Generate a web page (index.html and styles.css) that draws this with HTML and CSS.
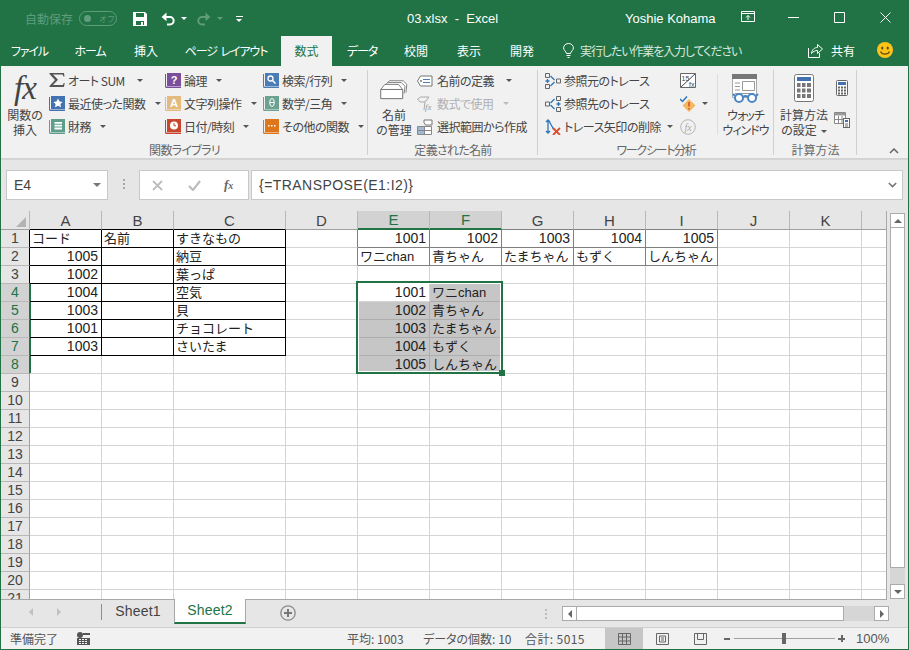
FILE: index.html
```html
<!DOCTYPE html>
<html lang="ja">
<head>
<meta charset="utf-8">
<title>03.xlsx - Excel</title>
<link rel="stylesheet" href="styles.css">
</head>
<body>
<div class="window">
  <header class="titlebar">
    <span class="autosave">自動保存</span>
    <span class="toggle"><i class="knob"></i><b>オフ</b></span>
    <svg class="qa save" viewBox="0 0 14 14"><path fill="#fff" d="M0 0h12l2 2v12H0z"/><path fill="#217346" d="M3 1h8v4H3zM3 9h8v4H3z"/><path fill="#fff" d="M8 10h2v3H8z"/></svg>
    <svg class="qa undo" viewBox="0 0 14 14"><path fill="none" stroke="#fff" stroke-width="2" d="M2.5 5H9a3.6 3.6 0 0 1 0 7.4H6"/><path fill="#fff" d="M5.5 .6v8.6L.6 5z"/></svg>
    <i class="arw w up1"></i>
    <svg class="qa redo" viewBox="0 0 14 14"><path fill="none" stroke="#5e9c7a" stroke-width="2" d="M11.5 5H5a3.6 3.6 0 0 0 0 7.4H8"/><path fill="#5e9c7a" d="M8.5 .6v8.6L13.4 5z"/></svg>
    <i class="arw dim up2"></i>
    <span class="custom"><i></i><i class="arw w"></i></span>
    <span class="doc">03.xlsx&nbsp; -&nbsp; Excel</span>
    <span class="user">Yoshie Kohama</span>
    <svg class="wbtn opt" viewBox="0 0 14 12"><path fill="none" stroke="#fff" d="M.5 .5h13v10H.5zM.5 2.500h13M7 9V4.500M5 6.500l2-2 2 2"/></svg>
    <svg class="wbtn min" viewBox="0 0 11 11"><path stroke="#fff" d="M0 5.500h11"/></svg>
    <svg class="wbtn max" viewBox="0 0 11 11"><path fill="none" stroke="#fff" d="M.5 .5h10v10H.5z"/></svg>
    <svg class="wbtn cls" viewBox="0 0 11 11"><path stroke="#fff" d="M.5 .5l10 10M10.500 .5l-10 10"/></svg>
  </header>

  <nav class="tabs">
    <span class="tab k">ファイル</span>
    <span class="tab k">ホーム</span>
    <span class="tab">挿入</span>
    <span class="tab k">ページ レイアウト</span>
    <span class="tab active">数式</span>
    <span class="tab k">データ</span>
    <span class="tab">校閲</span>
    <span class="tab">表示</span>
    <span class="tab">開発</span>
    <svg class="bulb" viewBox="0 0 11 15"><path fill="none" stroke="#fff" d="M3.500 10.500C3 8 .6 7.500.6 4.800a4.900 4.300 0 0 1 9.800 0C10.400 7.500 8 8 7.500 10.500zM3.500 12.500h4M4.500 14.500h2"/></svg>
    <span class="tell">実行したい作業を入力してください</span>
    <svg class="shareic" viewBox="0 0 15 15"><path fill="none" stroke="#fff" d="M.5 5v9.500h11V10M3.500 10.500C4 6 7 4.500 9.500 4.500V1.500l5 4.500-5 4.500V7.500C7 7.500 5 8.500 3.500 10.500z"/></svg>
    <span class="share">共有</span>
    <svg class="smile" viewBox="0 0 16 16"><circle cx="8" cy="8" r="8" fill="#fcc419"/><ellipse cx="5.300" cy="6" rx="1.100" ry="1.600" fill="#5c4a10"/><ellipse cx="10.700" cy="6" rx="1.100" ry="1.600" fill="#5c4a10"/><path fill="none" stroke="#5c4a10" stroke-width="1.200" d="M3.500 9.500c1.500 3.500 7.500 3.500 9 0"/></svg>
  </nav>

  <section class="ribbon">
    <div class="group g1">
      <div class="gbody">
        <div class="big b-fx">
          <span class="fx">fx</span>
          <span class="blabel">関数の<br>挿入</span>
        </div>
        <div class="col c1">
          <div class="item">
            <svg class="ic sigma" viewBox="0 0 16 14"><path fill="#555" d="M.5 0H15l.5 3.500h-1L13.500 1.500H4l5 5.300L4 12h9.800l1-2h.9L15 14H.5v-1.100L6 7 .5 1z"/></svg>
            <span>オート SUM</span><i class="arw m12"></i>
          </div>
          <div class="item">
            <svg class="ic" viewBox="0 0 16 16"><path fill="#4472b0" d="M0 1h1v12.500h15v1.500H1.500Q0 15 0 13.500zM2 0H16v13H2z"/><path fill="#fff" d="M9 2.500l1.500 3 3.200.4-2.300 2.200.6 3.200L9 9.800l-3 1.500.6-3.200-2.300-2.200 3.200-.4z"/></svg>
            <span>最近使った関数</span><i class="arw"></i>
          </div>
          <div class="item">
            <svg class="ic" viewBox="0 0 16 16"><path fill="#5f9e8b" d="M0 1h1v12.500h15v1.500H1.500Q0 15 0 13.500zM2 0H16v13H2z"/><path fill="#fff" d="M5.500 3h7.500v1.800H5.500zM5.500 5.800h7.500v1.800H5.500zM5.500 8.600h7.500v1.800H5.500z"/></svg>
            <span>財務</span><i class="arw"></i>
          </div>
        </div>
        <div class="col c2">
          <div class="item">
            <svg class="ic" viewBox="0 0 16 16"><path fill="#7a4f9c" d="M0 1h1v12.500h15v1.500H1.500Q0 15 0 13.500zM2 0H16v13H2z"/><text x="9" y="11" class="glyph" fill="#fff">?</text></svg>
            <span>論理</span><i class="arw"></i>
          </div>
          <div class="item">
            <svg class="ic" viewBox="0 0 16 16"><path fill="#e4bb7c" d="M0 1h1v12.500h15v1.500H1.500Q0 15 0 13.500zM2 0H16v13H2z"/><text x="9" y="11" class="glyph" fill="#fff">A</text></svg>
            <span>文字列操作</span><i class="arw"></i>
          </div>
          <div class="item">
            <svg class="ic" viewBox="0 0 16 16"><path fill="#c8452e" d="M0 1h1v12.500h15v1.500H1.500Q0 15 0 13.500zM2 0H16v13H2z"/><circle cx="9" cy="6.500" r="4" fill="#fff"/><path fill="none" stroke="#c8452e" d="M9 4v2.800h2"/></svg>
            <span>日付/時刻</span><i class="arw"></i>
          </div>
        </div>
        <div class="col c3">
          <div class="item">
            <svg class="ic" viewBox="0 0 16 16"><path fill="#4a7db5" d="M0 1h1v12.500h15v1.500H1.500Q0 15 0 13.500zM2 0H16v13H2z"/><circle cx="7.500" cy="5.500" r="2.500" fill="none" stroke="#fff" stroke-width="1.300"/><path stroke="#fff" stroke-width="1.600" d="M9.500 7.500l3 3"/></svg>
            <span>検索/行列</span><i class="arw"></i>
          </div>
          <div class="item">
            <svg class="ic" viewBox="0 0 16 16"><path fill="#6ba28f" d="M0 1h1v12.500h15v1.500H1.500Q0 15 0 13.500zM2 0H16v13H2z"/><ellipse cx="9" cy="6.500" rx="2.300" ry="4" fill="none" stroke="#fff"/><path stroke="#fff" d="M6.700 6.500h4.600"/></svg>
            <span>数学/三角</span><i class="arw"></i>
          </div>
          <div class="item">
            <svg class="ic" viewBox="0 0 16 16"><path fill="#e0761b" d="M0 1h1v12.500h15v1.500H1.500Q0 15 0 13.500zM2 0H16v13H2z"/><path fill="#fff" d="M5 6h1.500v1.500H5zM8 6h1.500v1.500H8zM11 6h1.500v1.500H11z"/></svg>
            <span>その他の関数</span><i class="arw"></i>
          </div>
        </div>
      </div>
      <div class="glabel">関数ライブラリ</div>
    </div>

    <div class="group g2">
      <div class="gbody">
        <div class="big b-name">
          <svg class="bigic" viewBox="0 0 30 24"><path fill="#fff" stroke="#777" d="M5 9l5-6h15l4 4-1 9"/><path fill="#fff" stroke="#777" d="M3 11l5-6h15l4 4-1 8"/><path fill="#fff" stroke="#777" d="M1 12l4-5h15l4 5"/><path fill="#fff" stroke="#666" d="M.5 12.500h24v10H.5z"/></svg>
          <span class="blabel">名前<br>の管理</span>
        </div>
        <div class="col c4">
          <div class="item">
            <svg class="ic" viewBox="0 0 16 12"><path fill="#fff" stroke="#777" d="M3.500 1H15v10H3.500L.5 6z"/><circle cx="4" cy="6" r="1" fill="#777"/><path stroke="#4a7db5" d="M6 4.500h7M6 7.500h7"/></svg>
            <span>名前の定義</span><i class="arw m12"></i>
          </div>
          <div class="item off">
            <svg class="ic" viewBox="0 0 16 16"><path fill="none" stroke="#aaa" d="M3.500 1H12L9 5l-2 1-4 0L.7 3zM8 6l-1 8"/><text x="8" y="14" class="mini" fill="#999">fx</text></svg>
            <span>数式で使用</span><i class="arw lite"></i>
          </div>
          <div class="item">
            <svg class="ic" viewBox="0 0 16 16"><path fill="#fff" stroke="#888" d="M.5 7.500h14v8H.5z"/><path fill="#9fb9d6" d="M1 8h6v3H1zM1 12h6v3H1z"/><path stroke="#888" d="M7.500 8v7M1 11.500h13"/><path fill="#fff" stroke="#777" d="M7 1h8v5H8.500L7 3.500z"/></svg>
            <span>選択範囲から作成</span>
          </div>
        </div>
      </div>
      <div class="glabel">定義された名前</div>
    </div>

    <div class="group g3">
      <div class="gbody">
        <div class="col c5">
          <div class="item">
            <svg class="ic" viewBox="0 0 16 16"><path fill="none" stroke="#666" d="M.5 .5h4v4h-4zM.5 11.500h4v4h-4zM11.500 6h4v4h-4z"/><path fill="none" stroke="#2e75b6" stroke-width="1.300" d="M2.500 6v4M.5 8h4M5.500 3l4 4M5.500 13l4-4"/></svg>
            <span>参照元のトレース</span>
          </div>
          <div class="item">
            <svg class="ic" viewBox="0 0 16 16"><path fill="none" stroke="#666" d="M.5 6h4v4h-4zM11.500 .5h4v4h-4zM11.500 11.500h4v4h-4z"/><path fill="none" stroke="#2e75b6" stroke-width="1.300" d="M13.500 6v4M11.500 8h4M5.500 7l4-4M5.500 9l4 4"/></svg>
            <span>参照先のトレース</span>
          </div>
          <div class="item">
            <svg class="ic" viewBox="0 0 16 16"><path fill="none" stroke="#2e75b6" stroke-width="1.300" d="M3 1v13M1 3l2-2 2 2M1 12l2 2 2-2M4 2l5 9"/><path stroke="#d9502e" stroke-width="1.800" d="M8 9l7 7M15 9l-7 7"/></svg>
            <span>トレース矢印の削除</span><i class="arw m3"></i>
          </div>
        </div>
        <div class="col c6">
          <div class="item">
            <svg class="ic" viewBox="0 0 16 16"><path fill="#fff" stroke="#666" d="M.5 .5h15v14H.5z"/><text x="1.500" y="7.500" class="mini2" fill="#444">15</text><path stroke="#444" d="M1 14L15 1"/><text x="9" y="13.500" class="mini2" fill="#444">fx</text></svg>
          </div>
          <div class="item">
            <svg class="ic" viewBox="0 0 16 16"><path fill="#f4b860" d="M9 3l6.500 6.500L9 16 2.500 9.500z"/><path stroke="#d9502e" stroke-width="1.600" d="M9 6v4.500M9 12v1.500"/><path fill="none" stroke="#2e75b6" stroke-width="1.500" d="M0 3l2.500 2.500L7 .5"/></svg>
            <i class="arw m3"></i>
          </div>
          <div class="item">
            <svg class="ic" viewBox="0 0 16 16"><circle cx="8" cy="8" r="7.300" fill="none" stroke="#b5b5b5"/><text x="8" y="12" text-anchor="middle" class="mini3" fill="#aaa">fx</text></svg>
          </div>
        </div>
        <i class="vsep"></i>
        <div class="big b-watch">
          <svg class="watchic" viewBox="0 0 30 30"><path fill="#fff" stroke="#aaa" d="M1.500 .5h24v23h-24z"/><path fill="#777" d="M1 0h25v5H1z"/><path fill="none" stroke="#999" d="M11.500 7.500h12v9h-12zM4 9h5M4 12.500h5M4 16h5M4 19.500h19"/><circle cx="8" cy="24" r="4" fill="#fff" stroke="#4a86c5" stroke-width="2"/><circle cx="21" cy="24" r="4" fill="#fff" stroke="#4a86c5" stroke-width="2"/><path fill="none" stroke="#4a86c5" stroke-width="2" d="M12 23q2.500-2 5 0M4 22l-2-2M25 22l2-2"/></svg>
          <span class="blabel tight">ウォッチ<br>ウィンドウ</span>
        </div>
      </div>
      <div class="glabel gl3">ワークシート分析</div>
    </div>

    <div class="group g4">
      <div class="gbody">
        <div class="big b-calc">
          <svg class="calcic" viewBox="0 0 20 28"><rect x=".5" y=".5" width="19" height="27" rx="2" fill="#fff" stroke="#777"/><path fill="#4472b0" d="M3 3h14v4H3z"/><path fill="#777" d="M3 9h3.500v4H3zM8 9h3.500v4H8zM13 9h4v4h-4zM3 14.500h3.500v4H3zM8 14.500h3.500v4H8zM13 14.500h4v4h-4zM3 20h3.500v4H3zM8 20h3.500v4H8zM13 20h4v4h-4z"/></svg>
          <span class="blabel">計算方法<br>の設定<i class="arw in"></i></span>
        </div>
        <div class="col c7">
          <svg class="calc-s" viewBox="0 0 12 16"><rect x=".5" y=".5" width="11" height="15" rx="1" fill="#fff" stroke="#666"/><path fill="#4472b0" d="M2 2h8v3H2z"/><path fill="#666" d="M2 6.500h2v2H2zM5 6.500h2v2H5zM8 6.500h2v2H8zM2 9.500h2v2H2zM5 9.500h2v2H5zM8 9.500h2v2H8zM2 12.500h2v2H2zM5 12.500h2v2H5zM8 12.500h2v2H8z"/></svg>
          <svg class="calc-t" viewBox="0 0 16 16"><path fill="#fff" stroke="#888" d="M.5 .5h11v11H.5z"/><path fill="#9a9a9a" d="M1 1h10v2.500H1z"/><path stroke="#888" d="M4.500 4v7M8 4v7M1 7.500h10"/><rect x="9.500" y="6.500" width="6" height="9" fill="#fff" stroke="#666"/><path fill="#4472b0" d="M11 8h3v2h-3z"/><path stroke="#666" d="M11 12h3M11 14h3"/></svg>
        </div>
      </div>
      <div class="glabel gl4">計算方法</div>
    </div>
    <svg class="collapse" viewBox="0 0 10 6"><path fill="none" stroke="#666" stroke-width="1.500" d="M1 5l4-4 4 4"/></svg>
  </section>

  <section class="formula">
    <div class="namebox"><span>E4</span><i class="arw big-arw"></i></div>
    <span class="grip"></span>
    <div class="fxbox">
      <svg class="fbtn" viewBox="0 0 11 11"><path stroke="#bdbdbd" stroke-width="1.800" d="M1 1l9 9M10 1l-9 9"/></svg>
      <svg class="fbtn chk" viewBox="0 0 13 11"><path fill="none" stroke="#bdbdbd" stroke-width="2.200" d="M1 6l4 4 7-9"/></svg>
      <span class="fbtn-fx">f<small>x</small></span>
    </div>
    <div class="fbox"><span>{=TRANSPOSE(E1:I2)}</span>
      <svg class="chev" viewBox="0 0 11 7"><path fill="none" stroke="#777" stroke-width="2" d="M1 1l4.500 4.500L10 1"/></svg>
    </div>
  </section>

  <section class="sheetarea">
    <div class="sheet">
      <table class="grid">
        <colgroup>
          <col class="w-rh"><col class="w-n"><col class="w-n"><col class="w-c"><col class="w-n"><col class="w-n"><col class="w-n"><col class="w-n"><col class="w-n"><col class="w-n"><col class="w-n"><col class="w-n"><col class="w-n">
        </colgroup>
        <thead>
          <tr>
            <th class="corner"><svg viewBox="0 0 10 10"><path fill="#b4b4b4" d="M10 0v10H0z"/></svg></th>
            <th class="hb">A</th><th class="hb">B</th><th class="hb">C</th><th>D</th>
            <th class="hs">E</th><th class="hs">F</th><th class="hg">G</th><th class="hg">H</th><th class="hg">I</th><th>J</th><th>K</th><th></th>
          </tr>
        </thead>
        <tbody>
          <tr><th class="rb">1</th><td class="b">コード</td><td class="b">名前</td><td class="b">すきなもの</td><td class="gr"></td><td class="g n">1001</td><td class="g n">1002</td><td class="g n">1003</td><td class="g n">1004</td><td class="g n">1005</td><td></td><td></td><td></td></tr>
          <tr><th class="rb">2</th><td class="b n">1005</td><td class="b"></td><td class="b">納豆</td><td class="gr"></td><td class="g">ワニchan</td><td class="g">青ちゃん</td><td class="g">たまちゃん</td><td class="g">もずく</td><td class="g">しんちゃん</td><td></td><td></td><td></td></tr>
          <tr><th class="rb">3</th><td class="b n">1002</td><td class="b"></td><td class="b">葉っぱ</td><td></td><td></td><td></td><td></td><td></td><td></td><td></td><td></td><td></td></tr>
          <tr><th class="rs">4</th><td class="b n">1004</td><td class="b"></td><td class="b">空気</td><td></td><td class="n">1001</td><td class="f">ワニchan</td><td></td><td></td><td></td><td></td><td></td><td></td></tr>
          <tr><th class="rs">5</th><td class="b n">1003</td><td class="b"></td><td class="b">貝</td><td></td><td class="f n">1002</td><td class="f">青ちゃん</td><td></td><td></td><td></td><td></td><td></td><td></td></tr>
          <tr><th class="rs">6</th><td class="b n">1001</td><td class="b"></td><td class="b">チョコレート</td><td></td><td class="f n">1003</td><td class="f">たまちゃん</td><td></td><td></td><td></td><td></td><td></td><td></td></tr>
          <tr><th class="rs">7</th><td class="b n">1003</td><td class="b"></td><td class="b">さいたま</td><td></td><td class="f n">1004</td><td class="f">もずく</td><td></td><td></td><td></td><td></td><td></td><td></td></tr>
          <tr><th class="rs">8</th><td></td><td></td><td></td><td></td><td class="f n">1005</td><td class="f">しんちゃん</td><td></td><td></td><td></td><td></td><td></td><td></td></tr>
          <tr><th>9</th><td></td><td></td><td></td><td></td><td></td><td></td><td></td><td></td><td></td><td></td><td></td><td></td></tr>
          <tr><th>10</th><td></td><td></td><td></td><td></td><td></td><td></td><td></td><td></td><td></td><td></td><td></td><td></td></tr>
          <tr><th>11</th><td></td><td></td><td></td><td></td><td></td><td></td><td></td><td></td><td></td><td></td><td></td><td></td></tr>
          <tr><th>12</th><td></td><td></td><td></td><td></td><td></td><td></td><td></td><td></td><td></td><td></td><td></td><td></td></tr>
          <tr><th>13</th><td></td><td></td><td></td><td></td><td></td><td></td><td></td><td></td><td></td><td></td><td></td><td></td></tr>
          <tr><th>14</th><td></td><td></td><td></td><td></td><td></td><td></td><td></td><td></td><td></td><td></td><td></td><td></td></tr>
          <tr><th>15</th><td></td><td></td><td></td><td></td><td></td><td></td><td></td><td></td><td></td><td></td><td></td><td></td></tr>
          <tr><th>16</th><td></td><td></td><td></td><td></td><td></td><td></td><td></td><td></td><td></td><td></td><td></td><td></td></tr>
          <tr><th>17</th><td></td><td></td><td></td><td></td><td></td><td></td><td></td><td></td><td></td><td></td><td></td><td></td></tr>
          <tr><th>18</th><td></td><td></td><td></td><td></td><td></td><td></td><td></td><td></td><td></td><td></td><td></td><td></td></tr>
          <tr><th>19</th><td></td><td></td><td></td><td></td><td></td><td></td><td></td><td></td><td></td><td></td><td></td><td></td></tr>
          <tr><th>20</th><td></td><td></td><td></td><td></td><td></td><td></td><td></td><td></td><td></td><td></td><td></td><td></td></tr>
          <tr><th>21</th><td></td><td></td><td></td><td></td><td></td><td></td><td></td><td></td><td></td><td></td><td></td><td></td></tr>
        </tbody>
      </table>
      <div class="selection"><i class="handle"></i></div>
    </div>
    <div class="vscroll">
      <span class="sbtn"><i class="tri up"></i></span>
      <span class="vthumb"></span>
      <span class="vtrack"></span>
      <span class="sbtn"><i class="tri down"></i></span>
    </div>
  </section>

  <section class="sheettabs">
    <div class="nav"><i class="tri left lite"></i><i class="tri right lite"></i></div>
    <span class="stab">Sheet1</span>
    <span class="stab on">Sheet2</span>
    <svg class="plus" viewBox="0 0 16 16"><circle cx="8" cy="8" r="7.200" fill="none" stroke="#8a8a8a" stroke-width="1.300"/><path stroke="#777" stroke-width="2" d="M8 4v8M4 8h8"/></svg>
    <span class="hgrip"></span>
    <div class="hscroll">
      <span class="sbtn h"><i class="tri left"></i></span>
      <span class="hthumb"></span>
      <span class="htrack"></span>
      <span class="sbtn h"><i class="tri right"></i></span>
    </div>
  </section>

  <footer class="status">
    <span class="ready">準備完了</span>
    <svg class="macro" viewBox="0 0 13 13"><circle cx="3" cy="3" r="3" fill="#555"/><path fill="#555" d="M6 1h7v2H6zM0 6h13v7H0z"/><path fill="#f1f1f1" d="M2 7h2v1H2zM5 7h2v1H5zM8 7h2v1H8zM2 9h2v1H2zM5 9h2v1H5zM8 9h2v1H8zM2 11h2v1H2zM5 11h2v1H5zM8 11h2v1H8z"/></svg>
    <span class="st s1">平均: 1003</span>
    <span class="st s2">データの個数: 10</span>
    <span class="st s3">合計: 5015</span>
    <span class="view on"><svg viewBox="0 0 13 12"><path fill="none" stroke="#666" d="M.5 .5h12v11H.5zM4.500 .5v11M8.500 .5v11M.5 4h12M.5 8h12"/></svg></span>
    <span class="view"><svg viewBox="0 0 13 12"><path fill="none" stroke="#666" d="M.5 .5h12v11H.5zM3.500 3h6v6h-6zM5 5h3M5 7h3"/></svg></span>
    <span class="view"><svg viewBox="0 0 13 12"><path fill="none" stroke="#666" d="M.5 .5h12v11H.5zM3.500 .5v6h6v-6"/></svg></span>
    <div class="zoom">
      <i class="zm"></i>
      <span class="slider"><i class="thumb"></i></span>
      <i class="zp"></i>
      <span class="pct">100%</span>
    </div>
  </footer>
</div>
</body>
</html>
```

FILE: styles.css
```css
* { box-sizing: border-box; }
html, body { margin: 0; padding: 0; }
body { width: 909px; height: 650px; overflow: hidden; font-family: "Noto Sans CJK JP", "Liberation Sans", sans-serif; font-size: 12px; color: #444; }
i { font-style: normal; display: block; }
svg { display: block; flex: none; }

.window { width: 909px; height: 650px; border: 1px solid #217346; border-top: 0; background: #e6e6e6; display: flex; flex-direction: column; overflow: hidden; }

/* title */
.titlebar { height: 36px; background: #217346; display: flex; align-items: center; color: #fff; flex: none; margin-left: -1px; margin-right: -1px; padding-top: 1px; }
.autosave { margin-left: 25px; color: #5f9d7c; font-size: 12px; font-feature-settings: "palt"; width: 47px; white-space: nowrap; }
.toggle { margin-left: 7px; width: 38px; height: 15px; border: 1px solid #5f9d7c; border-radius: 8px; display: flex; align-items: center; color: #5f9d7c; font-size: 8px; }
.knob { width: 7px; height: 7px; border-radius: 50%; background: #5f9d7c; margin-left: 4px; }
.toggle b { font-weight: 400; margin-left: 8px; white-space: nowrap; }
.qa { width: 14px; height: 14px; }
.save { margin-left: 16px; }
.undo { margin-left: 14px; }
.up1 { margin-left: 5px; }
.redo { margin-left: 10px; }
.up2 { margin-left: 4px; }
.custom { margin-left: 13px; width: 7px; display: flex; flex-direction: column; gap: 2px; margin-top: 1px; }
.custom i:first-child { height: 1px; background: #fff; }
.doc { margin-left: 164px; width: 92px; font: 13px "Liberation Sans", sans-serif; color: #fff; white-space: nowrap; }
.user { margin-left: 126px; width: 92px; font: 13px "Liberation Sans", sans-serif; white-space: nowrap; }
.wbtn { flex: none; margin-bottom: 3px; }
.opt { width: 14px; height: 12px; margin-left: 24px; }
.min { width: 11px; height: 11px; margin-left: 33px; }
.max { width: 11px; height: 11px; margin-left: 35px; }
.cls { width: 11px; height: 11px; margin-left: 35px; }

.arw { width: 0; height: 0; border-left: 3px solid transparent; border-right: 3px solid transparent; border-top: 3px solid #555; flex: none; margin-left: 6px; }
.arw.w { border-top-color: #fff; }
.arw.dim { border-top-color: #5f9d7c; }
.arw.lite { border-top-color: #bbb; }
.arw.m12 { margin-left: 9px; }
.arw.m3 { margin-left: 3px; }
.arw.in { display: inline-block; vertical-align: 2px; margin-left: 4px; }
.custom .arw { margin-left: 0; border-width: 3px 3.500px 0; }

/* tabs */
.tabs { height: 30px; background: #217346; display: flex; align-items: stretch; color: #fff; flex: none; margin: 0 -1px; }
.tab { font-size: 12px; font-feature-settings: "palt"; line-height: 29px; white-space: nowrap; flex: none; text-align: center; }
.tab.k { letter-spacing: -1.1px; word-spacing: 2px; }
.tab:nth-child(1) { width: 59px; }
.tab:nth-child(2) { width: 62px; }
.tab:nth-child(3) { width: 50px; }
.tab:nth-child(4) { width: 110px; }
.tab:nth-child(5) { width: 51px; }
.tab:nth-child(6) { width: 60px; }
.tab:nth-child(7) { width: 48px; }
.tab:nth-child(8) { width: 58px; }
.tab:nth-child(9) { width: 48px; }
.tab.active { background: #f1f1f1; color: #217346; }
.bulb { width: 11px; height: 15px; margin: 7px 0 0 17px; }
.tell { margin-left: 6px; width: 228px; line-height: 29px; font-feature-settings: "palt"; letter-spacing: -1.1px; color: #d8e8df; white-space: nowrap; }
.shareic { width: 15px; height: 15px; margin-top: 7px; }
.share { margin-left: 8px; width: 46px; line-height: 29px; }
.smile { width: 16px; height: 16px; margin-top: 6px; }

/* ribbon */
.ribbon { height: 94px; flex: none; background: #f1f1f1; border-bottom: 2px solid #d4d4d4; display: flex; position: relative; font-feature-settings: "palt"; white-space: nowrap; }
.group { display: flex; flex-direction: column; height: 92px; flex: none; position: relative; }
.group::after { content: ""; position: absolute; right: 0; top: 4px; bottom: 3px; width: 1px; background: #d0d0d0; }
.g1 { width: 367px; }
.g2 { width: 170px; }
.g3 { width: 236px; }
.g4 { width: 83px; }
.gbody { height: 76px; display: flex; padding-top: 3px; flex: none; }
.glabel { text-align: center; color: #666; line-height: 16px; height: 16px; letter-spacing: -.7px; }
.gl3 { letter-spacing: -1.3px; }
.gl4 { letter-spacing: 0; }
.col { display: flex; flex-direction: column; flex: none; }
.item { height: 23px; display: flex; align-items: center; gap: 3px; }
.item span { letter-spacing: -.5px; }
.ic { width: 16px; height: 16px; }
.sigma { height: 14px; margin-top: -2px; }
.item.off { color: #b0b0b0; }
.big { display: flex; flex-direction: column; align-items: center; flex: none; position: relative; }
.blabel { text-align: center; line-height: 15px; }
.blabel.tight { letter-spacing: -1px; }
.b-fx { width: 48px; }
.fx { font: italic 33px/38px "Liberation Serif", serif; color: #444; height: 38px; letter-spacing: -1px; }
.c1 { width: 116px; }
.c2 { width: 98px; }
.c3 { width: 100px; }
.b-name { width: 49px; padding-left: 3px; }
.bigic { width: 28px; height: 22px; margin: 9px 0 7px; }
.g2 .ic { margin-right: 1px; }
.c5 { margin-left: 7px; width: 135px; }
.c6 { width: 37px; }
.vsep { width: 1px; height: 61px; background: #dedede; margin: 5px 0 0 0; }
.b-watch { width: 55px; }
.watchic { width: 30px; height: 30px; margin: 5px 0 3px; }
.b-calc { width: 54px; margin-left: 3px; }
.calcic { width: 20px; height: 28px; margin: 5px 0 5px; }
.c7 { width: 22px; align-items: center; }
.calc-s { width: 12px; height: 16px; margin-top: 11px; }
.calc-t { width: 16px; height: 16px; margin-top: 16px; }
.collapse { position: absolute; left: 888px; top: 82px; width: 10px; height: 6px; }
.glyph { font: 700 11px "Liberation Sans", sans-serif; text-anchor: middle; }
.mini { font: italic 9px "Liberation Serif", serif; }
.mini2 { font: 7px "Liberation Sans", sans-serif; }
.mini3 { font: italic 10px "Liberation Serif", serif; }

/* formula */
.formula { height: 51px; flex: none; display: flex; padding: 10px 5px 11px 5px; }
.namebox { width: 102px; height: 30px; border: 1px solid #c8c8c8; background: #fff; display: flex; align-items: center; justify-content: space-between; padding: 0 6px 0 7px; font: 14px "Liberation Sans", sans-serif; color: #444; }
.arw.big-arw { border-width: 4px 4px 0; border-top-color: #777; }
.grip { width: 2px; height: 12px; margin: 9px 14px 0 15px; background-image: linear-gradient(#aaa 2px, transparent 2px); background-size: 2px 4px; }
.fxbox { width: 110px; height: 30px; border: 1px solid #c8c8c8; background: #fff; display: flex; align-items: center; padding-left: 12px; }
.fbtn { width: 11px; height: 11px; }
.fbtn.chk { width: 13px; margin-left: 25px; }
.fbtn-fx { margin-left: 23px; font: italic 700 13px "Liberation Serif", serif; color: #666; }
.fbtn-fx small { font-size: 10px; }
.fbox { width: 652px; height: 30px; margin-left: 2px; border: 1px solid #c8c8c8; background: #fff; display: flex; align-items: center; justify-content: space-between; padding: 0 5px 0 7px; font: 14px "Liberation Sans", sans-serif; letter-spacing: .45px; color: #444; }
.chev { width: 9px; height: 6px; }

/* sheet */
.sheetarea { height: 389px; flex: none; display: flex; }
.sheet { width: 886px; height: 389px; position: relative; overflow: hidden; background: #fff; border-right: 1px solid #a8a8a8; border-bottom: 1px solid #a8a8a8; flex: none; }
.grid { table-layout: fixed; border-collapse: separate; border-spacing: 0; width: 933px; font-size: 13px; }
.w-rh { width: 29px; }
.w-n { width: 72px; }
.w-c { width: 112px; }
.grid tr { height: 18px; }
.grid td, .grid th { height: 18px; padding: 0; overflow: hidden; white-space: nowrap; }
.grid td { border-right: 1px solid #d4d4d4; border-bottom: 1px solid #d4d4d4; padding: 0 2px; line-height: 17px; color: #222; font-family: "Liberation Sans", "Noto Sans CJK JP", sans-serif; }
.grid thead th { background: #e6e6e6; border-right: 1px solid #b8b8b8; border-bottom: 1px solid #9f9f9f; font: 400 15px/17px "Liberation Sans", sans-serif; color: #444; }
.grid tbody th { background: #e6e6e6; border-right: 1px solid #9f9f9f; border-bottom: 1px solid #b8b8b8; font: 400 14px/17px "Liberation Sans", sans-serif; color: #444; }
.corner svg { width: 10px; height: 10px; margin: 3px 0 0 15px; }
.grid thead th.hb { border-bottom-color: #000; }
.grid thead th.hg { border-bottom-color: #7f7f7f; }
.grid thead th.hs { background: #d2d2d2; color: #217346; border-bottom: 2px solid #217346; }
.grid tbody th.rb { border-right-color: #000; }
.grid tbody th.rs { background: #d2d2d2; color: #217346; border-right-color: #217346; box-shadow: 1px 0 0 #217346; }
.grid td.b { border-color: #000; }
.grid td.g { border-color: #7f7f7f; }
.grid td.gr { border-right-color: #7f7f7f; }
.grid td.f { background: #c6c6c6; border-color: #adadad; }
.grid td.n { text-align: right; padding-right: 3px; font-size: 14px; }
.selection { position: absolute; left: 355px; top: 70px; width: 147px; height: 93px; border: 2px solid #217346; box-shadow: inset 0 0 0 1px #fff; }
.handle { position: absolute; right: -4px; bottom: -4px; width: 6px; height: 6px; background: #217346; }

.vscroll { width: 21px; height: 388px; padding: 2px 0 0 3px; display: flex; flex-direction: column; flex: none; }
.sbtn { width: 15px; height: 15px; background: #fff; border: 1px solid #ababab; display: flex; align-items: center; justify-content: center; flex: none; }
.vthumb { width: 15px; height: 340px; background: #fff; border: 1px solid #ababab; border-top: 0; flex: none; }
.vtrack { width: 15px; flex: 1; background: #d6d6d6; }
.tri { width: 0; height: 0; border: 3.500px solid transparent; flex: none; }
.tri.up { border-top: 0; border-bottom: 4px solid #666; border-left-width: 4px; border-right-width: 4px; }
.tri.down { border-bottom: 0; border-top: 4px solid #666; border-left-width: 4px; border-right-width: 4px; }
.tri.left { border-left: 0; border-right: 4px solid #666; border-top-width: 4px; border-bottom-width: 4px; }
.tri.right { border-right: 0; border-left: 4px solid #666; border-top-width: 4px; border-bottom-width: 4px; }
.tri.left.lite { border-right-color: #c0c0c0; }
.tri.right.lite { border-left-color: #c0c0c0; }

/* sheet tabs */
.sheettabs { height: 28px; flex: none; display: flex; border-bottom: 1px solid #d0d0d0; position: relative; }
.nav { width: 101px; height: 23px; display: flex; align-items: center; gap: 24px; padding-left: 28px; position: relative; }
.nav::after { content: ""; position: absolute; right: 0; top: 4px; height: 16px; width: 1px; background: #8f8f8f; }
.stab { width: 72px; height: 24px; font: 14px/23px "Liberation Sans", sans-serif; text-align: center; letter-spacing: .2px; color: #444; flex: none; }
.stab.on { background: #fff; color: #217346; margin-top: -1px; height: 25px; border-left: 1px solid #a8a8a8; border-right: 1px solid #a8a8a8; border-bottom: 2px solid #217346; }
.plus { width: 16px; height: 16px; margin: 5px 0 0 34px; }
.hgrip { width: 2px; height: 10px; margin: 9px 0 0 249px; background-image: linear-gradient(#bbb 2px, transparent 2px); background-size: 2px 4px; }
.hscroll { display: flex; height: 15px; margin: 6px 0 0 15px; }
.sbtn.h { width: 15px; }
.hthumb { width: 267px; background: #fff; border: 1px solid #ababab; border-left: 0; flex: none; }
.htrack { width: 30px; background: #d6d6d6; flex: none; }

/* status */
.status { height: 21px; flex: none; background: #f1f1f1; display: flex; align-items: center; color: #555; font-feature-settings: "palt"; white-space: nowrap; }
.ready { margin-left: 9px; width: 49px; }
.macro { width: 13px; height: 13px; margin-left: 18px; }
.st { flex: none; }
.s1 { margin-left: 257px; width: 76px; }
.s2 { width: 102px; }
.s3 { width: 80px; letter-spacing: .4px; }
.view { width: 38px; height: 21px; display: flex; align-items: center; justify-content: center; flex: none; }
.view svg { width: 13px; height: 12px; }
.view.on { background: #c6c6c6; }
.zoom { display: flex; align-items: center; margin-left: 5px; }
.zm { width: 6px; height: 2px; background: #666; }
.slider { width: 101px; height: 1px; background: #a0a0a0; margin-left: 4px; position: relative; }
.thumb { position: absolute; left: 48px; top: -5px; width: 4px; height: 11px; background: #666; }
.zp { width: 7px; height: 7px; margin-left: 3px; background: linear-gradient(#666,#666) center/7px 2px no-repeat, linear-gradient(#666,#666) center/2px 7px no-repeat; }
.pct { margin-left: 11px; font: 13px "Liberation Sans", sans-serif; color: #555; }
```
